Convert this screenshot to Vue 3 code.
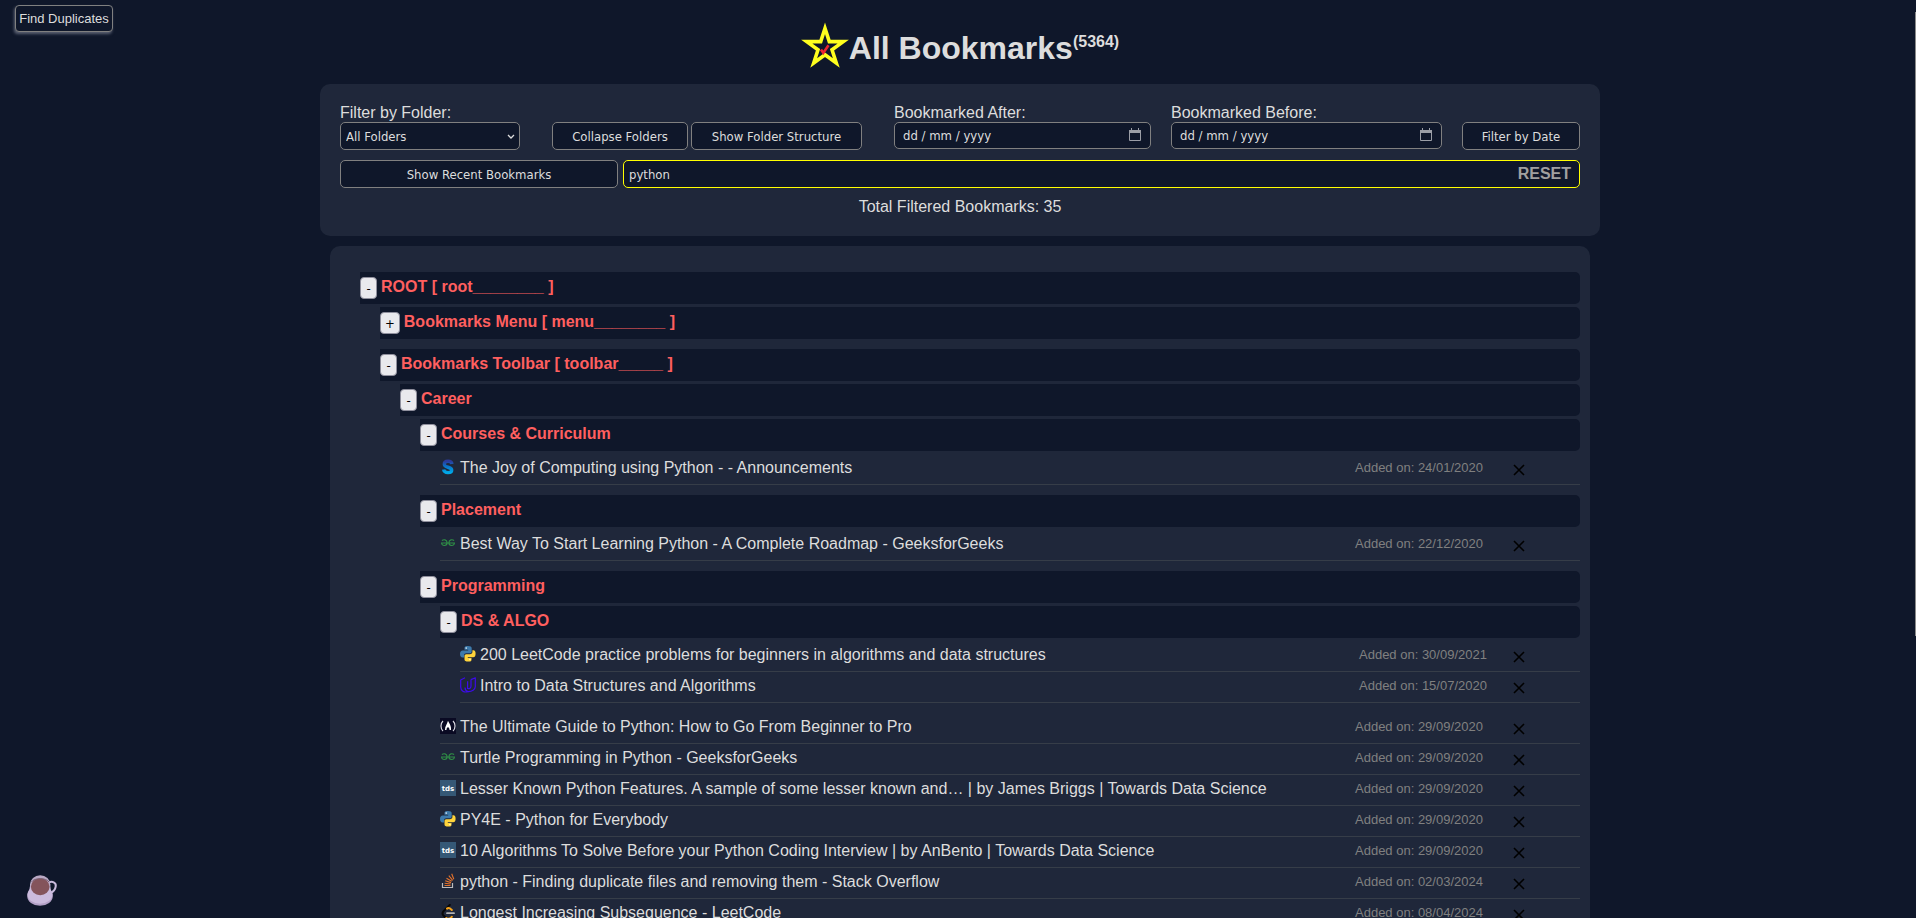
<script setup>
import { ref, computed } from 'vue'

const folder = ref('All Folders')
const after = ref('')
const before = ref('')
const query = ref('python')

const tree = [
  { type: 'folder', level: 0, name: 'ROOT [ root________ ]', open: true },
  { type: 'folder', level: 1, name: 'Bookmarks Menu [ menu________ ]', open: false, end: true },
  { type: 'folder', level: 1, name: 'Bookmarks Toolbar [ toolbar_____ ]', open: true },
  { type: 'folder', level: 2, name: 'Career', open: true },
  { type: 'folder', level: 3, name: 'Courses & Curriculum', open: true },
  { type: 'link', level: 4, icon: 'swayam', name: 'The Joy of Computing using Python - - Announcements', date: '24/01/2020', end: true },
  { type: 'folder', level: 3, name: 'Placement', open: true },
  { type: 'link', level: 4, icon: 'gfg', name: 'Best Way To Start Learning Python - A Complete Roadmap - GeeksforGeeks', date: '22/12/2020', end: true },
  { type: 'folder', level: 3, name: 'Programming', open: true },
  { type: 'folder', level: 4, name: 'DS & ALGO', open: true },
  { type: 'link', level: 5, icon: 'python', name: '200 LeetCode practice problems for beginners in algorithms and data structures', date: '30/09/2021' },
  { type: 'link', level: 5, icon: 'udacity', name: 'Intro to Data Structures and Algorithms', date: '15/07/2020', end: true },
  { type: 'link', level: 4, icon: 'fcc', name: 'The Ultimate Guide to Python: How to Go From Beginner to Pro', date: '29/09/2020' },
  { type: 'link', level: 4, icon: 'gfg', name: 'Turtle Programming in Python - GeeksforGeeks', date: '29/09/2020' },
  { type: 'link', level: 4, icon: 'tds', name: 'Lesser Known Python Features. A sample of some lesser known and… | by James Briggs | Towards Data Science', date: '29/09/2020' },
  { type: 'link', level: 4, icon: 'python', name: 'PY4E - Python for Everybody', date: '29/09/2020' },
  { type: 'link', level: 4, icon: 'tds', name: '10 Algorithms To Solve Before your Python Coding Interview | by AnBento | Towards Data Science', date: '29/09/2020' },
  { type: 'link', level: 4, icon: 'stack', name: 'python - Finding duplicate files and removing them - Stack Overflow', date: '02/03/2024' },
  { type: 'link', level: 4, icon: 'leetcode', name: 'Longest Increasing Subsequence - LeetCode', date: '08/04/2024' },
]
const total = computed(() => 35)
</script>

<template>
  <div class="page">
    <button class="find" type="button">Find Duplicates</button>

    <header class="title">
      <svg class="star" viewBox="0 0 48 48" aria-hidden="true">
        <path d="M24 6.300 28.300 19.600H42.300L31 27.800 35.300 41 24 32.800 12.700 41 17 27.800 5.700 19.600H19.700Z" fill="none" stroke="#ffff1e" stroke-width="3.600" stroke-miterlimit="6" />
        <path d="M20 27.500 22.300 31 27.500 23.300" fill="none" stroke="#ee2430" stroke-width="2.600" />
      </svg>
      <h1>All Bookmarks<sup>(5364)</sup></h1>
    </header>

    <section class="filters">
      <div class="row">
        <div class="field where">
          <label for="folder">Filter by Folder:</label>
          <div class="wrap">
            <select id="folder" v-model="folder" class="ctl"><option>All Folders</option></select>
            <svg class="chevron" viewBox="0 0 8 5" aria-hidden="true"><path d="M1 1 4 4 7 1" fill="none" stroke="#ddd" stroke-width="1.300" /></svg>
          </div>
        </div>
        <div class="pair">
          <button class="ctl collapse" type="button">Collapse Folders</button>
          <button class="ctl structure" type="button">Show Folder Structure</button>
        </div>
        <div class="dates">
          <div class="field after">
            <label for="after">Bookmarked After:</label>
            <div class="wrap">
              <input id="after" v-model="after" class="ctl date" type="text" placeholder="dd / mm / yyyy">
              <svg class="cal" viewBox="0 0 14 14" aria-hidden="true"><path d="M1.500 2.500h11v10h-11z" fill="none" stroke="#9b9ea6" /><path d="M1 2h12v3H1zM3 0h1v2H3zM10 0h1v2h-1z" fill="#9b9ea6" /></svg>
            </div>
          </div>
          <div class="field before">
            <label for="before">Bookmarked Before:</label>
            <div class="wrap">
              <input id="before" v-model="before" class="ctl date" type="text" placeholder="dd / mm / yyyy">
              <svg class="cal" viewBox="0 0 14 14" aria-hidden="true"><path d="M1.500 2.500h11v10h-11z" fill="none" stroke="#9b9ea6" /><path d="M1 2h12v3H1zM3 0h1v2H3zM10 0h1v2h-1z" fill="#9b9ea6" /></svg>
            </div>
          </div>
          <button class="ctl bydate" type="button">Filter by Date</button>
        </div>
      </div>
      <div class="row second">
        <button class="ctl recent" type="button">Show Recent Bookmarks</button>
        <div class="wrap search">
          <input v-model="query" class="ctl query" type="text" aria-label="Search bookmarks">
          <button class="reset" type="button" @click="query = ''">RESET</button>
        </div>
      </div>
      <p class="total">Total Filtered Bookmarks: {{ total }}</p>
    </section>

    <main class="tree">
      <div v-for="(n, i) in tree" :key="i" :class="[n.type, 'l' + n.level, { end: n.end }]">
        <template v-if="n.type === 'folder'">
          <button class="toggle" type="button">{{ n.open ? '-' : '+' }}</button>
          <span class="name">{{ n.name }}</span>
        </template>
        <template v-else>
          <div class="main">
            <svg class="fav" viewBox="0 0 16 16" aria-hidden="true">
              <g v-if="n.icon === 'swayam'">
                <linearGradient id="sw" x1="0" y1="0" x2="0" y2="1"><stop offset="0" stop-color="#2b3a9c" /><stop offset=".5" stop-color="#0878cc" /><stop offset="1" stop-color="#00a8e8" /></linearGradient>
                <path d="M12 5C11.500 2.500 9.500 2.300 8 2.300 5.800 2.300 4.300 3.400 4.300 5.200 4.300 9 11.700 7.500 11.700 11 11.700 12.700 10 13.600 8 13.600 5.500 13.600 4 12.500 3.600 10.500" fill="none" stroke="url(#sw)" stroke-width="3.400" />
              </g>
              <g v-else-if="n.icon === 'gfg'" fill="none" stroke="#2f8d46" stroke-width="1.200">
                <path d="M2 5.700C3.300 4.200 7.100 4.300 7.100 7.700 7.100 11.300 1.600 11.400 1.600 8H14.400C14.400 11.400 8.900 11.300 8.900 7.700 8.900 4.300 12.700 4.200 14 5.700" />
              </g>
              <g v-else-if="n.icon === 'python'">
                <path d="M7.900 0C4.500 0 4.500 1.400 4.500 2.200V3.800H8.200V4.500H2.800C1 4.500 0 6 0 8S1 11.500 2.600 11.500H4V9.500C4 8.200 5 7.300 6.300 7.300H10C11 7.300 11.700 6.500 11.700 5.500V2.200C11.700.9 10.500 0 7.900 0Z" fill="#3d7aab" />
                <path d="M8.100 15.600C11.500 15.600 11.500 14.300 11.500 13.400V11.900H7.800V11.200H13.200C15 11.200 15.600 9.600 15.600 7.700S15 4.300 13.400 4.300H12.400V6C12.400 7.400 11.300 8.200 10 8.200H6.200C5.200 8.200 4.500 9 4.500 10V13.400C4.500 14.800 5.800 15.600 8.100 15.600Z" fill="#ffd43b" />
                <circle cx="6.200" cy="2.100" r=".8" fill="#e6eef5" /><circle cx="9.900" cy="13.500" r=".8" fill="#fff6d0" />
              </g>
              <g v-else-if="n.icon === 'udacity'" fill="none" stroke="#3d0bea" stroke-width="1.200" stroke-linejoin="round">
                <path d="M5 .8.700 3V10C.700 13.500 4 16 8 14.600 6 14 5 12.500 5 10.500" />
                <path d="M11 2.600 15.300.8V9.500C15.300 12.600 12 14.700 8 14.600M11 2.600V9C11 11 9.500 12 7.600 11.500V4.300" />
              </g>
              <g v-else-if="n.icon === 'fcc'">
                <path d="M0 0h16v16H0z" fill="#0a0a23" />
                <path d="M3 3C.3 5.500.3 10.500 3 13M13 3C15.700 5.500 15.700 10.500 13 13" fill="none" stroke="#d8d8e0" stroke-width="1.200" />
                <path d="M8 2.800C9.200 5.500 11.500 8 11 12H9.500C9.600 10.500 9 9.600 8 9.300 7 9.600 6.400 10.500 6.500 12H5C4.800 8.500 7 6.500 8 2.800Z" fill="#fff" />
              </g>
              <g v-else-if="n.icon === 'tds'">
                <path d="M0 0h16v16H0z" fill="#355876" />
                <text x="8" y="11" text-anchor="middle" class="tds">tds</text>
              </g>
              <g v-else-if="n.icon === 'stack'" fill="none">
                <path d="M2.500 10V14.500H12.500V10" stroke="#bcbbbb" stroke-width="1.200" />
                <path d="M4.500 12.500H10.500M4.600 10.300 10.600 11M5.200 7.800 11 9.600M6.500 5.200 11.700 8.200M8.800 2.700 12.700 7.300M11.700.7 13.800 6.300" stroke="#e3722c" stroke-width="1.100" />
              </g>
              <g v-else fill="none" stroke-linecap="round">
                <path d="M9.800.9 3.500 7.300C2.300 8.600 2.300 10.200 3.500 11.500L6.300 14.300" stroke="#080808" stroke-width="2" />
                <path d="M7 4.600C8.600 3.300 9.600 3.800 11.800 6M6.300 14C8.200 15.700 9.800 15 11.800 12.800" stroke="#f5a21a" stroke-width="2" />
                <path d="M7 9.200H14" stroke="#b3b3b3" stroke-width="1.800" />
              </g>
            </svg>
            <a href="#">{{ n.name }}</a>
          </div>
          <span class="added">Added on: {{ n.date }}</span>
          <button class="del" type="button" aria-label="Delete bookmark"><svg viewBox="0 0 12 12" aria-hidden="true"><path d="M1 1 11 11M11 1 1 11" stroke="#000" stroke-width="1.600" /></svg></button>
        </template>
      </div>
    </main>

    <a class="coffee" href="#" aria-label="Buy a coffee">
      <svg viewBox="0 0 32 32" aria-hidden="true">
        <path d="M22.500 8C26 5.500 30.500 7.500 29.700 11.500 29.200 14.500 27 17 24.500 18" fill="none" stroke="#c9bbdc" stroke-width="2" />
        <ellipse cx="14" cy="21" rx="12.800" ry="9.800" fill="#b3a1c6" />
        <ellipse cx="14" cy="19.500" rx="12.500" ry="9.300" fill="#cbbbdd" />
        <path d="M4.300 9 2.500 20C5 28 23 28 25.500 20L24 9Z" fill="#cbbbdd" />
        <ellipse cx="14.200" cy="9.800" rx="10.200" ry="9.600" fill="#b9a9c4" />
        <ellipse cx="14.200" cy="11.800" rx="9.300" ry="8.400" fill="#84545b" />
        <path d="M5.500 7C8.500 2.500 20 2.500 23 7" fill="none" stroke="#795d70" stroke-width="1" />
      </svg>
    </a>
    <div class="thumb" aria-hidden="true"></div>
  </div>
</template>

<style>
html { background: #0f172a; }
body { margin: 0; overflow: hidden; }
</style>

<style scoped>
.page {
  box-sizing: border-box;
  height: 100vh;
  overflow: hidden;
  padding: 22px 0 0 4px;
  background: #0f172a;
  color: #ddd;
  font: 16px/18px "Liberation Sans", Arial, sans-serif;
}
button, input, select { box-sizing: border-box; margin: 0; }
.find {
  position: absolute;
  left: 15px;
  top: 5px;
  width: 98px;
  height: 27px;
  padding: 0;
  border: 1px solid #808080;
  border-radius: 4px;
  background: #0f172a;
  color: #ddd;
  font: 13px "Liberation Sans", Arial, sans-serif;
  box-shadow: -1px 2px 3px 0 #5a6072;
}
.title { display: flex; justify-content: center; height: 62px; }
.star { width: 48px; height: 48px; }
h1 { margin: 8px 0 0; font-size: 32px; line-height: 36px; }
sup { font-size: 16px; line-height: 0; }
.filters {
  box-sizing: border-box;
  width: 1280px;
  max-width: 100%;
  margin: 0 auto;
  padding: 20px 20px 20px;
  border-radius: 10px;
  background: #1f273a;
}
.row { display: flex; align-items: flex-end; }
.row.second { margin-top: 10px; gap: 5px; align-items: stretch; }
.field { display: flex; flex-direction: column; }
.wrap { position: relative; display: flex; }
.ctl {
  height: 28px;
  padding: 0 5px;
  border: 1px solid #808080;
  border-radius: 5px;
  background: #0f172a;
  color: #ddd;
  font: 13px "DejaVu Sans Condensed", "Noto Sans", sans-serif;
}
select.ctl { appearance: none; width: 100%; }
.where { width: 180px; }
.chevron { position: absolute; right: 5px; top: 12px; width: 8px; height: 5px; }
.pair { display: flex; gap: 3px; margin-left: 32px; }
.collapse { width: 136px; }
.structure { width: 171px; }
.dates { display: flex; flex: 1; align-items: flex-start; gap: 20px; margin-left: 32px; }
.after { flex: 257; }
.before { flex: 271; }
.date { width: 100%; height: 27px; padding: 0 8px; }
.date::placeholder { color: #ddd; opacity: 1; }
.cal { position: absolute; right: 9px; top: 6px; width: 14px; height: 14px; }
.bydate { width: 118px; margin-top: 18px; }
.recent { width: 278px; }
.search { flex: 1; }
.query { width: 100%; border-color: #ff0; outline: none; }
.reset {
  position: absolute;
  right: 9px;
  top: 5px;
  padding: 0;
  border: 0;
  background: none;
  color: #a0a0a0;
  font: bold 16px/18px "Liberation Sans", Arial, sans-serif;
}
.total { margin: 10px 0 0; text-align: center; }
.tree {
  box-sizing: border-box;
  width: 1260px;
  max-width: 100%;
  margin: 10px auto 0;
  padding: 26px 10px 26px 30px;
  border-radius: 10px;
  background: #1f273a;
}
.folder {
  display: flex;
  align-items: center;
  gap: 4px;
  height: 32px;
  margin-bottom: 3px;
  border-radius: 0 5px 5px 0;
  background: #0f172a;
  color: #ff5f5f;
  font-weight: bold;
}
.name { padding-bottom: 2px; }
.link {
  display: flex;
  align-items: flex-start;
  padding: 5px 0 7px;
  border-bottom: 1px solid #363d48;
}
.tree .end { margin-bottom: 10px; }
.l1 { margin-left: 20px; }
.l2 { margin-left: 40px; }
.l3 { margin-left: 60px; }
.l4 { margin-left: 80px; }
.l5 { margin-left: 100px; }
.toggle {
  min-width: 17px;
  height: 22px;
  padding: 0 4px;
  border: 1px solid #8f8f9d;
  border-radius: 4px;
  background: #e9e9ed;
  color: #000;
  font: 13px "DejaVu Sans Condensed", "Noto Sans", sans-serif;
}
.main { display: flex; flex: 0 0 80%; gap: 4px; min-width: 0; }
.main a { color: inherit; text-decoration: none; white-space: nowrap; }
.fav { width: 16px; height: 16px; flex: none; }
.tds { fill: #fff; font: bold 7px "DejaVu Sans", sans-serif; }
.added { flex: 1; padding-left: 3px; color: #808080; font-size: 13px; line-height: 17px; white-space: nowrap; }
.del { width: 20px; height: 16px; margin: 2px 51px 0 0; padding: 2px 4px; border: 0; background: none; }
.del svg { display: block; width: 12px; height: 12px; margin-top: 1px; }
.coffee { position: fixed; left: 26px; bottom: 11px; width: 32px; height: 32px; }
.coffee svg { display: block; }
.thumb { position: fixed; right: 0; top: 12px; width: 1px; height: 68vh; background: #8a8a8a; }
</style>
